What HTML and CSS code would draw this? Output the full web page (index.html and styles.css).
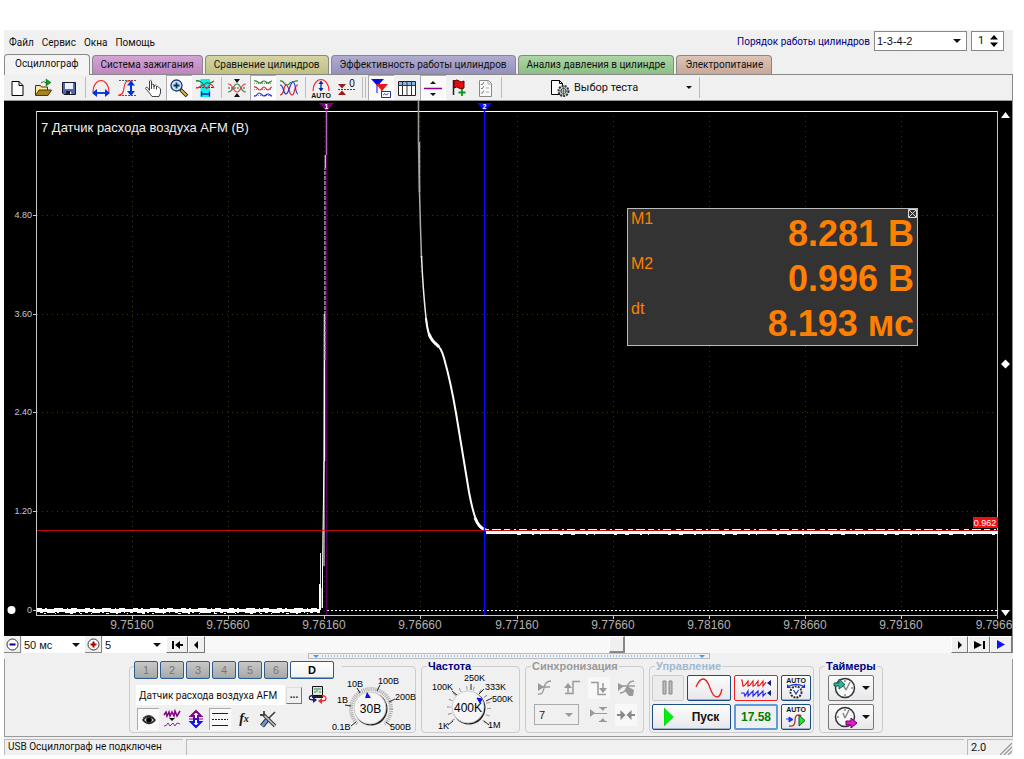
FILE: index.html
```html
<!DOCTYPE html>
<html lang="ru">
<head>
<meta charset="utf-8">
<title>USB Осциллограф</title>
<link rel="stylesheet" href="styles.css">
</head>
<body>
<div class="app">
  <header class="top">
    <nav class="menu">
      <a href="#file">Файл</a><a href="#service">Сервис</a><a href="#windows">Окна</a><a href="#help">Помощь</a>
    </nav>
    <div class="order">
      <label for="order">Порядок работы цилиндров</label>
      <span class="drop order-drop"><select id="order"><option>1-3-4-2</option></select></span>
      <span class="spin"><input type="text" value="1" aria-label="Цилиндр"><svg width="8" height="12" viewBox="0 0 8 12"><path d="M0 4.500 4 0l4 4.500zM0 7.500h8L4 12z"/></svg></span>
    </div>
  </header>

  <div class="tabs" role="tablist">
    <button class="tab active" role="tab" aria-selected="true">Осциллограф</button>
    <button class="tab violet" role="tab">Система зажигания</button>
    <button class="tab olive" role="tab">Сравнение цилиндров</button>
    <button class="tab indigo" role="tab">Эффективность работы цилиндров</button>
    <button class="tab green" role="tab">Анализ давления в цилиндре</button>
    <button class="tab brown" role="tab">Электропитание</button>
  </div>

  <div class="toolbar" role="toolbar">
    <button class="tool" aria-label="Новый"><svg viewBox="0 0 20 20"><path d="M5 3.500h7l4 4v10H5z" fill="#fff" stroke="#000"/><path d="M12 3.500v4h4" fill="none" stroke="#000"/></svg></button>
    <button class="tool" aria-label="Открыть"><svg viewBox="0 0 20 20"><path d="M2.500 17V7.500h5l1 1.500h6v4" fill="#ffe9a0" stroke="#453400"/><path d="M2.500 17.500 6 12h12.500L15 17.500z" fill="#a88420" stroke="#4c3a00"/><path d="M8 5q3-3 5 0" fill="none" stroke="#555"/><path d="M13 1l5 3.500L13 8z" fill="#00a020" stroke="#006010" stroke-width=".5"/></svg></button>
    <button class="tool" aria-label="Сохранить"><svg viewBox="0 0 20 20"><path d="M3.500 4.500h13v12H5l-1.500-1.500z" fill="#5268a8" stroke="#161b33"/><path d="M6 5h8v6H6z" fill="#eef2fa"/><path d="M7 13h6v3.500H7z" fill="#222"/><path d="M11 13.500h1.500V16H11z" fill="#fff"/></svg></button>
    <span class="sep"></span>
    <button class="tool" aria-label="По горизонтали"><svg viewBox="0 0 20 20"><path d="M2 14C2 7 6 2.500 10 2.500S18 7 18 14" fill="none" stroke="#f22" stroke-width="1.200"/><path d="M4 15h12" stroke="#0030e0" stroke-width="1.800"/><path d="M1 15l5-4v8zM19 15l-5-4v8z" fill="#0030e0"/></svg></button>
    <button class="tool" aria-label="По вертикали"><svg viewBox="0 0 20 20"><path d="M2 2.500h17M2 17.500h17" stroke="#555" stroke-dasharray="2 1"/><path d="M1 17q5 1 6-7t5-7h4" fill="none" stroke="#f22" stroke-width="1.200"/><path d="M14 5v11" stroke="#0030e0" stroke-width="2"/><path d="M14 2.500l4 5h-8zM14 18l4-5h-8z" fill="#0030e0"/></svg></button>
    <button class="tool" aria-label="Рука"><svg viewBox="0 0 20 20"><path d="M6.500 12.500V3q1-1.500 2 0v6-2.500q1.500-1 2.500.5V9 7.500q1.500-1 2.500.5v2-1.500q1.500-.5 2 .5l2 2v4L16 18.500H9L6.500 15 2.500 10.500q.5-2 2-1z" fill="#fff" stroke="#444"/><path d="M8.500 8v3M11 8.500V11M13.500 9v2.500" stroke="#444"/></svg></button>
    <button class="tool pressed" aria-label="Масштаб"><svg viewBox="0 0 20 20"><path d="M11 11l7 7" stroke="#111" stroke-width="3.500"/><path d="M12 12l5.500 5.500" stroke="#e8b040" stroke-width="2"/><circle cx="7.500" cy="7.500" r="5.500" fill="#c8e4fa" stroke="#183c70" stroke-width="1.300"/><path d="M4.500 7.500h6M7.500 4.500v6" stroke="#123060" stroke-width="1.800"/></svg></button>
    <button class="tool" aria-label="Участок"><svg viewBox="0 0 20 20"><path d="M5.500 1h9.500v18H5.500z" fill="#00f4f4"/><path d="M1 3q4-1 6 2t3 1 3-1 6-2" fill="none" stroke="#2a7a30" stroke-width="1.300"/><path d="M1 9.500h18" stroke="#333" stroke-dasharray="2 1"/><path d="M1 10q3 0 5-2t4 1 4-1 5 2" fill="none" stroke="#e03030" stroke-width="1.300"/><path d="M6 16h9M6.500 13.500v5M14.500 13.500v5" stroke="#0020b0" stroke-width="1.300"/></svg></button>
    <span class="sep"></span>
    <button class="tool" aria-label="Совместить"><svg viewBox="0 0 20 20"><path d="M1 10h18" stroke="#444" stroke-dasharray="2 1"/><path d="M1 14q3 0 5-4t4-4 4 4 5 4" fill="none" stroke="#38883c" stroke-width="1.200"/><path d="M1 6q3 0 5 4t4 4 4-4 5-4" fill="none" stroke="#e84040" stroke-width="1.200"/><path d="M7 1h6l-3 4zM7 19h6l-3-4z" fill="#111"/></svg></button>
    <button class="tool pressed" aria-label="Раздельно"><svg viewBox="0 0 20 20"><path d="M1 5.500h18M1 11.500h18M1 17.500h18" stroke="#888" stroke-dasharray="1 1"/><path d="M1 3c3-1 4 2 6 2s2-2 4-2 2 2 4 2 2-2 4-2" fill="none" stroke="#28802c" stroke-width="1.200"/><path d="M1 9c3-1 4 3 6 3s2-3 4-3 2 3 4 3 2-3 4-3" fill="none" stroke="#e02020" stroke-width="1.200"/><path d="M1 18c3 1 3-3 5-3s3 3 5 3 2-2 4-2 2 2 4 2" fill="none" stroke="#2030e0" stroke-width="1.200"/></svg></button>
    <button class="tool" aria-label="Наложить"><svg viewBox="0 0 20 20"><path d="M1 3c4-1 4 4 7 4s2-3 5-3 3-2 6-1" fill="none" stroke="#28802c" stroke-width="1.200"/><path d="M1 17c5 0 3-10 6-10s3 10 6 10 2-10 6-10" fill="none" stroke="#e02020" stroke-width="1.200"/><path d="M1 7c4 0 3 9 6 9s4-12 7-12 2 12 5 12" fill="none" stroke="#2030e0" stroke-width="1.200"/></svg></button>
    <span class="sep"></span>
    <button class="tool" aria-label="Авто"><svg viewBox="0 0 20 20"><path d="M2 13C2 6 6 1.500 10 1.500S18 6 18 13" fill="none" stroke="#f22" stroke-width="1.200"/><path d="M10 5v7" stroke="#0828a0" stroke-width="1.300"/><path d="M10 2.500l2.500 3.500h-5zM10 13.500l2.500-3.500h-5z" fill="#0828a0"/><text x="10" y="19.500" class="auto">AUTO</text></svg></button>
    <button class="tool" aria-label="Ноль"><svg viewBox="0 0 20 20"><path d="M1 11.500h17" stroke="#444" stroke-dasharray="2 1"/><path d="M1 6h8l-4 4.500zM1 17h8l-4-4.500z" fill="#a01818"/><text x="15" y="9" class="zero">0</text></svg></button>
    <span class="sep double"></span>
    <button class="tool pressed" aria-label="Маркеры"><svg viewBox="0 0 20 20"><path d="M6 5v10" stroke="#0808e0"/><path d="M0 1h13L6.500 8z" fill="#0808e0"/><path d="M10.500 9v8" stroke="#e81818"/><path d="M5 6h12l-6 7z" fill="#e81818"/><path d="M10.500 13.500h9v6h-9z" fill="#fff" stroke="#2030a0"/><path d="M12 17l2-1.500 1 1.500 2.500-1.500" fill="none" stroke="#2030a0" stroke-width=".8"/></svg></button>
    <button class="tool" aria-label="Таблица"><svg viewBox="0 0 20 20"><path d="M1.500 3.500h17v14h-17z" fill="#fff" stroke="#222"/><path d="M2 4h16v3H2z" fill="#8db4e0"/><path d="M1.500 7.500h17M5.500 3.500v14M10 3.500v14M14.500 3.500v14" stroke="#333"/></svg></button>
    <button class="tool pressed" aria-label="Линия"><svg viewBox="0 0 20 20"><path d="M1 10.500h18" stroke="#880090" stroke-width="1.500"/><path d="M7 6h6l-3-3zM7 15h6l-3 3z" fill="#111"/></svg></button>
    <button class="tool" aria-label="Флаг"><svg viewBox="0 0 20 20"><path d="M4.500 2v15" stroke="#222" stroke-width="1.500"/><path d="M5 3q3-2 5 0t5 0v7q-3 2-5 0t-5 0z" fill="#e01010" stroke="#500"/><path d="M13 11v7M9.500 14.500h7" stroke="#009818" stroke-width="1.800"/></svg></button>
    <button class="tool" aria-label="Отчёт"><svg viewBox="0 0 20 20"><path d="M4.500 2.500h9l3 3v13h-12z" fill="#fafafa" stroke="#888"/><path d="M6 6l1 1 2-3M6 10l1 1 2-3M6 14.500l1 1 2-3" fill="none" stroke="#777"/><path d="M11 10h3M11 14h3M13 3v3h3" fill="none" stroke="#aaa"/></svg></button>
    <span class="sep"></span>
    <button class="test">
      <svg width="20" height="20" viewBox="0 0 20 20"><path d="M1.500 2.500h8l3 3v11h-11z" fill="#fff" stroke="#000"/><path d="M9.500 2.500v3h3" fill="none" stroke="#000"/><circle cx="13.500" cy="13" r="5" fill="#cdd6c8" stroke="#333" stroke-width="2" stroke-dasharray="2 1"/><circle cx="13.500" cy="13" r="2.500" fill="#fff" stroke="#344"/><path d="M13.500 9v8M9.500 13h8" stroke="#344" stroke-width=".7"/></svg>
      <span>Выбор теста</span><i class="caret small"></i>
    </button>
    <span class="sep"></span>
  </div>

  <main class="scope">
    <svg class="plot" viewBox="4 101 1009 535" role="img" aria-label="7 Датчик расхода воздуха AFM (В)">
      <g class="grid">
        <path d="M132.500 116v499M228.500 116v499M324.500 116v499M420.500 116v499M517.500 116v499M613.500 116v499M709.500 116v499M805.500 116v499M901.500 116v499"/>
        <path d="M37 215.500h961M37 314.500h961M37 412.500h961M37 511.500h961"/>
      </g>
      <path class="frame-top" d="M36 111.500h962"/>
      <path class="frame" d="M36.500 111v505M997.500 111v505M36 615.500h962M132.500 615v4M228.500 615v4M324.500 615v4M420.500 615v4M517.500 615v4M613.500 615v4M709.500 615v4M805.500 615v4M901.500 615v4M997.500 615v4M33 215.500h4M33 314.500h4M33 412.500h4M33 511.500h4M33 610.500h4"/>
      <path d="M327 610.500h671" stroke="#fff" stroke-dasharray="2 2"/>
      <g fill="none" stroke="#fff">
        <path d="M37 610.500h283" stroke-width="3"/>
        <path d="M37 608.500h283" stroke-dasharray="5 3 2 7 9 4 1 3 6 8"/>
        <path d="M40 612.500h280" stroke-dasharray="3 4 8 2 2 6 11 3 1 5"/>
        <path d="M44 613.500h270" stroke-dasharray="2 9 1 14 3 7"/>
        <path d="M320.500 610v-57M322 608v-20" stroke="#ddd"/>
        <path d="M320 610v-26" stroke-width="2"/>
        <path d="M322.500 608V566L324 461"/>
        <path d="M324 566V460L324.500 314"/>
        <path d="M324.500 461V314" stroke-width="1.500"/>
        <path d="M325 360V168" stroke="#aaa" stroke-width="1.500" stroke-dasharray="4 1"/>
        <path d="M325.500 168v-13" stroke-width="1.500"/>
        <path d="M418.500 101v41l1 50" stroke="#999" stroke-width="1.600"/>
        <path d="M419.500 142v50l1 36 1 30" stroke="#aaa" stroke-width="1.500"/>
        <path d="M421.500 256Q423 290 426 318 427 330 431 338" stroke="#eee" stroke-width="1.500"/>
        <path d="M426 318Q427.500 332 430 337 432 341 436 344 441 347 444 358 451 383 456 413L469 492Q475 524 481 528L485 530" stroke-width="2"/>
        <path d="M429 334Q432 341 436 344L439 347M475 518Q479 528 486 530" stroke-width="3"/>
        <path d="M486 532.500h512" stroke-width="3"/>
        <path d="M484 529.500h514" stroke-dasharray="5 3 9 3 6 4 2 3 8 5"/>
        <path d="M517 534.500h480" stroke-dasharray="4 11 2 6 1 19 3 8"/>
      </g>
      <path d="M37 530.500h961" stroke="#e80808" stroke-opacity=".85"/>
      <path d="M326.500 103v52" stroke="#b868bc" stroke-width="1.500"/>
      <path d="M326.500 155v460" stroke="#580060" stroke-width="1.500"/>
      <path d="M484.500 105v510" stroke="#0808ff" stroke-width="1.500"/>
      <path d="M319 103h15l-7.500 8z" fill="#800080"/>
      <path d="M477 103h15l-7.500 8z" fill="#0808ff"/>
      <g class="mark"><text x="326.500" y="109">1</text><text x="484.500" y="109">2</text></g>
      <text class="channel" x="41" y="132">7 Датчик расхода воздуха AFM (В)</text>
      <g class="ylab"><text x="32" y="218">4.80</text><text x="32" y="317">3.60</text><text x="32" y="415">2.40</text><text x="32" y="514">1.20</text><text x="32" y="613">0</text></g>
      <g class="xlab"><text x="132" y="629">9.75160</text><text x="228" y="629">9.75660</text><text x="324" y="629">9.76160</text><text x="420" y="629">9.76660</text><text x="517" y="629">9.77160</text><text x="613" y="629">9.77660</text><text x="709" y="629">9.78160</text><text x="805" y="629">9.78660</text><text x="901" y="629">9.79160</text><text x="994" y="629">9.7966</text></g>
      <path d="M973 517h25v11h-25z" fill="#f01010"/>
      <text class="level" x="985" y="526">0.962</text>
      <circle cx="11.500" cy="610" r="4" fill="#fff"/>
      <path d="M1001 118h9l-4.500-6zM1001 610h9l-4.500 6zM1005.500 359.500l4.500 4.500-4.500 4.500-4.500-4.500z" fill="#fff"/>
      <path d="M1012.500 101v535" stroke="#888"/>
    </svg>
    <section class="readout">
      <button class="close" aria-label="Закрыть"><svg width="9" height="9" viewBox="0 0 9 9"><path d="M.5.5h8v8h-8zM1 1l7 7M8 1L1 8" fill="none" stroke="#ddd"/></svg></button>
      <dl>
        <div><dt>M1</dt><dd>8.281 В</dd></div>
        <div><dt>M2</dt><dd>0.996 В</dd></div>
        <div><dt>dt</dt><dd>8.193 мс</dd></div>
      </dl>
    </section>
  </main>

  <div class="timebar">
    <button class="round" aria-label="Уменьшить"><svg width="13" height="13" viewBox="0 0 13 13"><circle cx="6.500" cy="6.500" r="5.500" fill="#fff" stroke="#333"/><path d="M3.500 6.500h6" stroke="#000080" stroke-width="2"/></svg></button>
    <span class="drop"><select aria-label="Развёртка"><option>50 мс</option></select></span>
    <button class="round" aria-label="Увеличить"><svg width="13" height="13" viewBox="0 0 13 13"><circle cx="6.500" cy="6.500" r="5.500" fill="#fff" stroke="#333"/><path d="M3.500 6.500h6M6.500 3.500v6" stroke="#a00000" stroke-width="2"/></svg></button>
    <span class="drop"><select aria-label="Усиление"><option>5</option></select></span>
    <button class="nav wide" aria-label="В начало"><svg width="11" height="8" viewBox="0 0 11 8"><path d="M0 0h2v8H0zM3 4l5-4v3h3v2H8v3z"/></svg></button>
    <button class="nav" aria-label="Назад"><svg width="5" height="8" viewBox="0 0 5 8"><path d="M0 4l4-4v8z"/></svg></button>
    <input class="track" type="range" min="0" max="1000" value="554" aria-label="Положение">
    <button class="nav" aria-label="Вперёд"><svg width="5" height="8" viewBox="0 0 5 8"><path d="M5 4L1 0v8z"/></svg></button>
    <button class="nav wide" aria-label="В конец"><svg width="11" height="8" viewBox="0 0 11 8"><path d="M0 0l8 4-8 4zM9 0h2v8H9z"/></svg></button>
    <button class="nav wide" aria-label="Вперёд непрерывно"><svg width="8" height="9" viewBox="0 0 8 9"><path d="M0 0l8 4.500L0 9z" fill="#1010ff"/></svg></button>
  </div>

  <button class="splitter" aria-label="Свернуть панель"><i></i><span></span><i></i></button>

  <div class="panel">
    <section class="group channel-group">
      <div class="channel-main">
        <div class="channels">
          <button disabled>1</button><button disabled>2</button><button disabled>3</button><button disabled>4</button><button disabled>5</button><button disabled>6</button><button class="on">D</button>
        </div>
        <div class="sensor">
          <input type="text" value="Датчик расхода воздуха AFM" aria-label="Датчик">
          <button class="more" aria-label="Выбрать датчик">...</button>
          <button class="ico" aria-label="Инверсия"><svg width="20" height="20" viewBox="0 0 20 20"><path d="M4.500 1.500h10v9h-10z" fill="#dce8dc" stroke="#111"/><path d="M6 4h7M7 6v2M9 5v2M12 6v2" stroke="#285" /><path d="M4 11h11v2H4z" fill="#222"/><path d="M4 10.500q-4 1-2 4l4 .5" fill="none" stroke="#101890" stroke-width="1.300"/><path d="M5 12l4 3-4 3z" fill="#101890"/><path d="M14 10.500q6 1 3 5l-4 .5" fill="none" stroke="#f22" stroke-width="1.300"/><path d="M14 13l-4 3 4 3z" fill="#f22"/></svg></button>
        </div>
        <div class="modes">
          <button class="ico pressed" aria-label="Видимость"><svg width="20" height="20" viewBox="0 0 20 20"><path d="M5 11q5-7 12 0-6 7-12 0z" fill="#ddd" stroke="#222" stroke-width="1.500"/><circle cx="11" cy="11" r="2.800" fill="#000"/><path d="M5 9q6-5 11 0" fill="none" stroke="#333"/></svg></button>
          <button class="ico" aria-label="Фильтр"><svg width="20" height="20" viewBox="0 0 20 20"><path d="M2 6l2-3 1 4 2-4 1 4 2-4 2 4 1-5 2 5 3-5" fill="none" stroke="#880088" stroke-width="1.500"/><path d="M2 17q3 0 4-3l2 3 3-3 2 3 2-3 3 1" fill="none" stroke="#a020a0"/><path d="M7 9h6l-3 3z" fill="#111"/></svg></button>
          <button class="ico" aria-label="Сдвиг"><svg width="20" height="20" viewBox="0 0 20 20"><path d="M10 2l5 5h-3v3H8V7H5z" fill="#fff" stroke="#880088" stroke-width="2"/><path d="M10 18l5-5h-3v-3H8v3H5z" fill="#fff" stroke="#1010f0" stroke-width="2"/><path d="M3 10h14" stroke="#880088"/></svg></button>
          <button class="ico pressed" aria-label="Линии"><svg width="20" height="20" viewBox="0 0 20 20"><path d="M2 4.500h16M2 16.500h16" stroke="#222"/><path d="M2 10.500h16" stroke="#222" stroke-dasharray="2 1"/></svg></button>
          <button class="ico fx" aria-label="Функция"><em>f</em>x</button>
          <button class="ico" aria-label="Настройки"><svg width="20" height="20" viewBox="0 0 20 20"><path d="M17 3l-8 8" stroke="#333" stroke-width="1.500"/><path d="M9 11l-5 6" stroke="#223" stroke-width="5"/><path d="M9 11l-5 6" stroke="#6c94d0" stroke-width="3"/><path d="M5 5l12 12" stroke="#333" stroke-width="3.500"/><path d="M5 5l12 12" stroke="#ccc" stroke-width="1.500"/><path d="M6 2v4H2" fill="none" stroke="#444" stroke-width="1.800"/></svg></button>
        </div>
      </div>
      <svg class="dial" width="86" height="62" viewBox="330 672 86 62">
        <circle cx="370" cy="710" r="20" fill="none" stroke="#aaa" stroke-width="4" stroke-dasharray="1 1"/>
        <path d="M358 721l12-11 12 11 4 12h-32z" fill="#f0f0f0"/>
        <path d="M355 723l-5 4M350 707l-6-1M359 694l-3-5M376 692l3-6M388 703l6-3M385 723l5 4" stroke="#222"/>
        <circle cx="370" cy="710" r="16.500" fill="#222"/><circle cx="369" cy="709" r="16" fill="#f6f6f6" stroke="#ccc"/>
        <path d="M366 693l4 6h-6z" fill="#1010f0"/>
        <text x="369.500" y="714" class="value">30В</text>
        <g class="dl"><text x="331" y="731">0.1В</text><text x="336" y="704">1В</text><text x="346" y="688">10В</text><text x="377" y="685">100В</text><text x="394" y="701">200В</text><text x="389" y="731">500В</text></g>
      </svg>
    </section>

    <fieldset class="group freq">
      <legend>Частота</legend>
      <svg class="dial" width="86" height="58" viewBox="430 675 86 58">
        <circle cx="469" cy="710" r="20" fill="none" stroke="#999" stroke-width="4" stroke-dasharray="1 6"/>
        <path d="M457 721l12-11 12 11 4 12h-32z" fill="#f0f0f0"/>
        <path d="M453 723l-5 4M457 697l-5-4M471 692v-6M479 696l5-5M486 703l6-3M484 723l5 4" stroke="#222"/>
        <circle cx="469" cy="710" r="16.500" fill="#222"/><circle cx="468" cy="709" r="16" fill="#f6f6f6" stroke="#ccc"/>
        <path d="M477 700l5 1-2 4z" fill="#1010f0" stroke="#1010f0"/>
        <text x="468" y="714" class="value">400K</text>
        <g class="dl"><text x="438" y="731">1K</text><text x="432" y="692">100K</text><text x="464" y="683">250K</text><text x="485" y="692">333K</text><text x="492" y="704">500K</text><text x="488" y="730">1M</text></g>
      </svg>
    </fieldset>

    <fieldset class="group sync" disabled>
      <legend>Синхронизация</legend>
      <div class="sync-grid">
        <button class="ico" aria-label="Любой фронт"><svg width="20" height="20" viewBox="0 0 20 20"><path d="M3 16q5 1 6-6t7-7M7 9h8" fill="none" stroke="#999" stroke-width="1.300"/><path d="M3 5l6 4-6 4z" fill="#999"/></svg></button>
        <button class="ico" aria-label="Передний фронт"><svg width="20" height="20" viewBox="0 0 20 20"><path d="M3 15.500h8v-12h7M6 15v-6" fill="none" stroke="#999" stroke-width="1.500"/><path d="M2 10h8L6 5z" fill="#999"/></svg></button>
        <button class="ico light" aria-label="Задний фронт"><svg width="20" height="20" viewBox="0 0 20 20"><path d="M2 4.500h7v12h8M14 5v6" fill="none" stroke="#999" stroke-width="1.500"/><path d="M10 10h8l-4 5z" fill="#999"/></svg></button>
        <button class="ico" aria-label="Ручной"><svg width="20" height="20" viewBox="0 0 20 20"><path d="M2 5l6 3-6 5zM11 8l7 4-1 6h-4l-4-5z" fill="#999"/><path d="M4 15q5 0 7-6t7-6M7 8h12" fill="none" stroke="#999" stroke-width="1.300"/></svg></button>
        <span class="drop sync-drop"><select aria-label="Канал синхронизации"><option>7</option></select></span>
        <button class="ico" aria-label="Уровень"><svg width="20" height="20" viewBox="0 0 20 20"><path d="M1 4l5 4-5 4zM10 2h7l-3 4zM10 17h7l-3-4z" fill="#999"/><path d="M5 8.500h13M10 2.500h8M10 16.500h8" stroke="#999"/></svg></button>
        <button class="ico light" aria-label="Центр"><svg width="20" height="20" viewBox="0 0 20 20"><path d="M1 10h7M12 10h7" stroke="#888" stroke-width="2"/><path d="M9.500 10l-5-5v10zM10.500 10l5-5v10z" fill="#888"/></svg></button>
      </div>
    </fieldset>

    <fieldset class="group control">
      <legend>Управление</legend>
      <div class="control-grid">
        <button class="big off" disabled aria-label="Пауза"><svg width="12" height="16" viewBox="0 0 12 16"><path d="M1 1h3v13H1zM7 1h3v13H7z" fill="#bbb" stroke="#888"/></svg></button>
        <button class="big blue" aria-label="Синус"><svg width="30" height="20" viewBox="0 0 30 20"><path d="M2 9C5 2 7 1 9 1s5 3 7 9 5 9 7 9 4-3 5-8" fill="none" stroke="#e82020" stroke-width="1.300"/></svg></button>
        <button class="big red" aria-label="Запись"><svg width="32" height="20" viewBox="0 0 32 20"><path d="M1 2h1l1 6 2-1 3-4v5l2-1 3-4v5l2-1 3-4v5l2-1 3-4v5l3-4" fill="none" stroke="#e81818" stroke-width="1.200"/><path d="M1 15h3l1 3 3-5v5l2-2 3-3v5l2-2 3-3v5l2-2 3-3v5l3-3" fill="none" stroke="#2828f0" stroke-width="1.200"/><path d="M31 2v6l-4-3zM31 12v6l-4-3z" fill="#181880"/></svg></button>
        <button class="big blue" aria-label="Автонастройка"><svg width="22" height="22" viewBox="0 0 22 22"><text x="11" y="6" class="auto">AUTO</text><circle cx="11" cy="15" r="5.500" fill="#fff" stroke="#333" stroke-width="2" stroke-dasharray="2 1"/><path d="M8.500 13l2.500 4 2.500-4M2 10q9-5 18 0" fill="none" stroke="#1838d8" stroke-width="1.300"/><path d="M2 7v4h4zM20 7v4h-4z" fill="#1838d8"/></svg></button>
        <button class="big blue start"><svg width="10" height="18" viewBox="0 0 10 18"><path d="M0 0l9.500 9L0 18z" fill="#00f010" stroke="#0a0" stroke-width=".5"/></svg><span>Пуск</span></button>
        <button class="big sky time">17.58</button>
        <button class="big blue" aria-label="Автопуск"><svg width="22" height="22" viewBox="0 0 22 22"><text x="11" y="6" class="auto">AUTO</text><path d="M4 20q6 1 6-5t3-6 3 1" fill="none" stroke="#c03030" stroke-width="1.300"/><path d="M1 13h4M4 11l4 2.500-4 2.500z" fill="#1838ff" stroke="#1838ff"/><path d="M14 9l6 5.500-6 5.500z" fill="#20e820" stroke="#153"/></svg></button>
      </div>
    </fieldset>

    <fieldset class="group timers">
      <legend>Таймеры</legend>
      <div class="timer-col">
        <button class="big gray" aria-label="Таймер пуска"><svg width="24" height="22" viewBox="0 0 24 22"><circle cx="12" cy="11" r="9.500" fill="#fafafa" stroke="#333" stroke-width="1.500"/><path d="M13 13l-3-5M13 13l4-8M12 3v2M12 17v2M18 11h2" fill="none" stroke="#888" stroke-width="1.500"/><path d="M1 6h5V2l6 5.500L6 12V9H1z" fill="#30b0a0" stroke="#164"/></svg><i class="caret"></i></button>
        <button class="big gray" aria-label="Таймер останова"><svg width="24" height="22" viewBox="0 0 24 22"><circle cx="12" cy="11" r="9.500" fill="#fafafa" stroke="#333" stroke-width="1.500"/><path d="M12 12l-2-5M12 12l4-8M12 3v2M4 11h2" fill="none" stroke="#888" stroke-width="1.500"/><path d="M13 15h5v-3l6 5-6 5v-3h-5z" fill="#e818c8" stroke="#606"/></svg><i class="caret"></i></button>
      </div>
    </fieldset>
  </div>

  <footer class="status">
    <span>USB Осциллограф не подключен</span><span></span><span>2.0<svg width="12" height="12" viewBox="0 0 12 12"><path d="M0 12L12 0M4 12l8-8M8 12l4-4" stroke="#999" stroke-width="1.300"/></svg></span>
  </footer>
</div>
</body>
</html>
```
FILE: styles.css
```css
* { box-sizing: border-box; }

body {
  margin: 0;
  padding: 30px 11px 4px 4px;
  background: #fff;
  color: #111;
  font: 10px/14px Roboto, "Liberation Sans", sans-serif;
}

button, input, select {
  margin: 0;
  padding: 0;
  border: 0;
  background: none;
  color: inherit;
  font: inherit;
}

svg { display: block; flex: none; }

.app { background: #f0f0f0; }

/* Menu row */
.top { display: flex; justify-content: space-between; height: 24px; }
.menu { display: flex; align-items: center; gap: 8px; padding: 2px 0 0 5px; }
.menu a { color: inherit; text-decoration: none; }
.order { display: flex; align-items: flex-start; gap: 4px; padding: 1px 9px 0 0; }
.order label { color: #000080; padding-top: 4px; }

.drop { position: relative; display: flex; background: #fff; font: 11px/14px "Liberation Sans", Arial, sans-serif; }
.drop select { appearance: none; width: 100%; padding: 0 2px; opacity: 1; }
.drop::after {
  content: "";
  position: absolute;
  right: 5px;
  top: 50%;
  margin-top: -2px;
  border: 4px solid transparent;
  border-top-color: #111;
  border-bottom: 0;
  pointer-events: none;
}
.order-drop { width: 93px; height: 20px; border: 1px solid #888; }
.spin { display: flex; align-items: center; width: 33px; height: 20px; padding: 0 6px; border: 1px solid #888; background: #fff; font-size: 11px; }
.spin input { width: 12px; }

.caret { border: 4px solid transparent; border-top-color: #111; border-bottom: 0; }
.caret.small { border-width: 3px; border-bottom: 0; }

/* Tabs */
.tabs { display: flex; align-items: flex-end; gap: 2px; height: 21px; border-bottom: 1px solid #888; }
.tab { height: 19px; padding: 0 8px; border: 1px solid #888; border-bottom: 0; border-radius: 4px 4px 0 0; white-space: nowrap; }
.tab.active { height: 21px; margin-bottom: -1px; padding: 0 10px 2px; background: #f4f4f4; }
.violet { background: linear-gradient(#d4a4d4, #bf86bf); }
.olive { background: linear-gradient(#d4d4a4, #c0c084); }
.indigo { background: linear-gradient(#b0acd0, #9490ba); }
.green { background: linear-gradient(#acd6a4, #8cbf86); }
.brown { background: linear-gradient(#dcc4b8, #c8a898); }

/* Toolbar */
.toolbar { display: flex; height: 26px; border-right: 1px solid #888; border-bottom: 1px solid #999; background: #f0f0f0; }
.tool { display: flex; align-items: center; justify-content: center; width: 26px; height: 25px; }
.tool svg { width: 20px; height: 20px; }
.pressed { background: #fafafa; box-shadow: inset 1px 1px #aaa, inset -1px -1px #fff; }
.sep { width: 6px; margin: 2px 0; background: linear-gradient(#bbb, #bbb) 3px 0 / 1px 100% no-repeat; }
.sep.double { width: 8px; background: linear-gradient(#bbb, #bbb) 2px 0 / 1px 100% no-repeat, linear-gradient(#bbb, #bbb) 5px 0 / 1px 100% no-repeat; }
.test { display: flex; align-items: center; gap: 4px; width: 192px; padding: 0 4px 0 46px; font-size: 11px; }
.test span { flex: 1; text-align: left; }
.auto { font: bold 7px "Liberation Sans", Arial, sans-serif; text-anchor: middle; fill: #111; }
.zero { font: 10px "Liberation Sans", Arial, sans-serif; text-anchor: middle; }

/* Oscillogram */
.scope { position: relative; background: #000; font-family: "Liberation Sans", Arial, sans-serif; }
.plot { width: 100%; height: auto; }
.grid { stroke: #34340f; stroke-dasharray: 1 4; }
.frame-top { stroke: #fff; }
.frame { stroke: #c8c8c8; fill: none; }
.channel { font-size: 13px; fill: #eee; }
.ylab { font-size: 9px; fill: #c8c8c8; text-anchor: end; }
.xlab { font-size: 12px; fill: #b0b0b0; text-anchor: middle; }
.mark { font-size: 7px; font-weight: bold; fill: #fff; text-anchor: middle; }
.level { font-size: 9px; fill: #fff; text-anchor: middle; }

.readout { position: absolute; top: 107px; right: 95px; width: 291px; border: 1px solid #bbb; background: #333; color: #ff8000; }
.readout dl { margin: 0; padding-bottom: 1px; }
.readout dl div { display: flex; justify-content: space-between; height: 45px; padding: 1px 3px 0; }
.readout dt { font-size: 16px; line-height: 18px; }
.readout dd { margin: 0; padding-top: 2px; font-size: 36px; line-height: 44px; font-weight: bold; white-space: nowrap; }
.close { position: absolute; top: 0; right: 0; }

/* Time navigation */
.timebar { display: flex; height: 17px; border-right: 1px solid #888; }
.timebar .drop { width: 63px; margin-left: 1px; }
.round { display: flex; align-items: center; justify-content: center; width: 17px; border-right: 1px solid #888; border-bottom: 1px solid #888; }
.nav { display: flex; align-items: center; justify-content: center; width: 17px; border: 1px solid #fff; border-right-color: #777; border-bottom-color: #777; background: #f0f0f0; }
.nav.wide { width: 22px; }
.track { appearance: none; flex: 1; min-width: 0; background: #f8f8f8; }
.track::-webkit-slider-thumb { appearance: none; width: 16px; height: 17px; border: 1px solid #fff; border-right: 2px solid #888; border-bottom: 2px solid #888; background: #f0f0f0; }

.splitter { display: flex; align-items: center; gap: 3px; width: 402px; height: 6px; margin: 0 auto; padding: 0 4px; border: 1px solid #bbb; }
.splitter span { flex: 1; height: 2px; background: repeating-linear-gradient(90deg, #9cc4ee 0 1px, transparent 1px 3px); }
.splitter i { border: 3px solid transparent; border-top-color: #409cf0; border-bottom: 0; }

/* Control panel */
.panel { display: flex; align-items: flex-end; gap: 5px; height: 78px; padding: 0 0 3px 124px; border: solid #999; border-width: 0 1px 1px 1px; }
.group { min-width: 0; height: 73px; margin: 0; padding: 0; border: 1px solid #ccc; border-radius: 4px; }
.group legend { margin-left: 5px; padding: 0 1px; font: bold 11px/13px "Liberation Sans", Arial, sans-serif; color: #000080; white-space: nowrap; }

.channel-group { display: flex; width: 287px; height: 67px; }
.channel-main { width: 201px; }
.channels { display: flex; gap: 2px; width: 208px; margin: -6px 0 0 4px; padding-right: 8px; background: #f0f0f0; font: 11px/14px "Liberation Sans", Arial, sans-serif; }
.channels button { width: 24px; height: 18px; border: 1px solid #2c5c90; border-radius: 2px; background: linear-gradient(#c8c8c8, #a8a8a8); color: #777; box-shadow: inset 0 -1px #86a6c4; }
.channels .on { flex: 1; background: linear-gradient(#fff, #f0f0f0); color: #000; font-weight: bold; }
.sensor { display: flex; align-items: center; gap: 1px; padding: 5px 0 0 6px; }
.sensor input { width: 149px; height: 20px; padding-left: 3px; background: #fff; }
.more { width: 16px; height: 17px; border: 1px solid #ddd; border-right-color: #777; border-bottom-color: #777; font-weight: bold; line-height: 8px; }
.sensor .ico { margin-left: 4px; }
.modes { display: flex; gap: 2px; padding: 2px 0 0 7px; }
.ico { display: flex; align-items: center; justify-content: center; width: 22px; height: 22px; }
.fx { font: italic bold 10px/20px "Liberation Serif", serif; }
.fx em { font-size: 14px; }

.dial { font-family: "Liberation Sans", Arial, sans-serif; }
.dial .value { font-size: 12px; text-anchor: middle; }
.dial .dl { font-size: 9px; }
.channel-group .dial { margin-top: 4px; }
.freq { width: 99px; }
.freq .dial { margin: 0 0 0 8px; }

.group.sync { width: 119px; }
.group.sync legend { color: #999; }
.sync-grid { display: grid; grid-template-columns: repeat(4, 22px); gap: 5px; padding: 4px 0 0 8px; }
.sync-drop { grid-column: span 2; height: 21px; width: 45px; border: 1px solid #aaa; background: #f0f0f0; color: #222; }
.sync-drop select { padding-left: 4px; }
.sync-drop::after { border-top-color: #999; }
.light { background: #f8f8f8; }

.control { width: 165px; }
.group.control legend { color: #a0b8d4; }
.control-grid { display: grid; grid-template-columns: 32px 44px 44px 30px; gap: 3px; padding: 2px 0 0 2px; }
.big { display: flex; align-items: center; justify-content: center; height: 26px; border: 1px solid #999; border-radius: 2px; background: linear-gradient(#fcfcfc, #e8e8ec); }
.big.off { background: #ececec; border-color: #ccc; }
.big.blue { border-color: #1c4c80; box-shadow: inset 0 -1px #9ab4d0; }
.big.red { border-color: #f02020; }
.big.sky { border: 2px solid #5c9cdc; background: #f0f0f0; }
.start { grid-column: span 2; gap: 18px; font: bold 12px/14px "Liberation Sans", Arial, sans-serif; }
.time { font: bold 12px/14px "Liberation Sans", Arial, sans-serif; color: #008000; }

.timers { width: 64px; }
.timer-col { display: flex; flex-direction: column; gap: 3px; padding: 2px 8px 0; }
.big.gray { gap: 5px; border-color: #777; }

/* Status bar */
.status { display: flex; gap: 3px; padding-top: 2px; }
.status span { height: 16px; padding: 0 3px; border: solid #bbb; border-width: 1px 0 0 1px; white-space: nowrap; }
.status span:nth-child(1) { width: 179px; }
.status span:nth-child(2) { flex: 1; }
.status span:nth-child(3) { display: flex; justify-content: space-between; align-items: flex-end; width: 46px; padding-right: 1px; font-size: 11px; }
```
